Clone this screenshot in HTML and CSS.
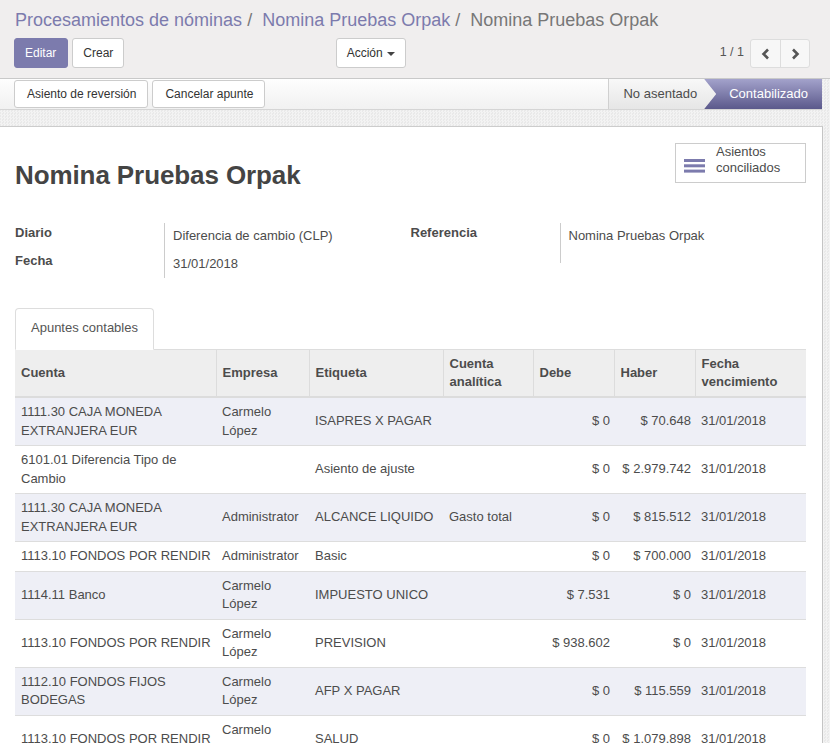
FILE: index.html
```html
<!DOCTYPE html>
<html lang="es">
<head>
<meta charset="utf-8">
<title>Nomina Pruebas Orpak</title>
<link rel="stylesheet" href="styles.css">
</head>
<body>
<div class="cp">
  <ol class="bc">
    <li><a>Procesamientos de nóminas</a></li>
    <li><a>Nomina Pruebas Orpak</a></li>
    <li class="active">Nomina Pruebas Orpak</li>
  </ol>
  <div class="cp-row">
    <div class="cp-left">
      <div class="btn-group">
        <button class="btn btn-primary">Editar</button>
        <button class="btn">Crear</button>
      </div>
      <button class="btn">Acción <span class="caret"></span></button>
    </div>
    <div class="cp-right">
      <span class="pager-val">1 / 1</span>
      <div class="pager-btns">
        <button class="pbtn"><svg width="10" height="12" viewBox="0 0 10 12"><polyline points="7,1.5 2.5,6 7,10.5" fill="none" stroke="#555" stroke-width="2.6"/></svg></button>
        <button class="pbtn"><svg width="10" height="12" viewBox="0 0 10 12"><polyline points="3,1.5 7.5,6 3,10.5" fill="none" stroke="#555" stroke-width="2.6"/></svg></button>
      </div>
    </div>
  </div>
</div>

<div class="content">
  <div class="statusbar">
    <div class="sb-btns">
      <button class="btn sb">Asiento de reversión</button>
      <button class="btn sb">Cancelar apunte</button>
    </div>
    <div class="sb-status">
      <span class="st st-off">No asentado</span>
      <span class="st st-on">Contabilizado</span>
    </div>
  </div>

  <div class="sheet">
    <div class="head">
      <h1 class="title">Nomina Pruebas Orpak</h1>
      <button class="stat-btn">
        <svg class="stat-ico" width="21" height="14" viewBox="0 0 21 14"><rect x="0" y="0" width="21" height="3" fill="#7c7bad"/><rect x="0" y="5.3" width="21" height="3" fill="#7c7bad"/><rect x="0" y="10.6" width="21" height="3" fill="#7c7bad"/></svg>
        <span class="stat-txt">Asientos<br>conciliados</span>
      </button>
    </div>

    <div class="groups">
      <div class="group">
        <div class="labels">
          <div class="lbl">Diario</div>
          <div class="lbl">Fecha</div>
        </div>
        <div class="vals vals-left">
          <div class="val">Diferencia de cambio (CLP)</div>
          <div class="val">31/01/2018</div>
        </div>
      </div>
      <div class="group">
        <div class="labels">
          <div class="lbl">Referencia</div>
        </div>
        <div class="vals vals-right">
          <div class="val">Nomina Pruebas Orpak</div>
        </div>
      </div>
    </div>

    <div class="tabs">
      <div class="tab">Apuntes contables</div>
    </div>

    <table class="lines">
      <colgroup>
        <col class="c1"><col class="c2"><col class="c3"><col class="c4"><col class="c5"><col class="c6"><col class="c7">
      </colgroup>
      <thead>
        <tr>
          <th>Cuenta</th><th>Empresa</th><th>Etiqueta</th><th>Cuenta<br>analítica</th><th>Debe</th><th>Haber</th><th>Fecha<br>vencimiento</th>
        </tr>
      </thead>
      <tbody>
        <tr class="odd"><td>1111.30 CAJA MONEDA<br>EXTRANJERA EUR</td><td>Carmelo<br>López</td><td>ISAPRES X PAGAR</td><td></td><td class="num">$ 0</td><td class="num">$ 70.648</td><td>31/01/2018</td></tr>
        <tr><td>6101.01 Diferencia Tipo de<br>Cambio</td><td></td><td>Asiento de ajuste</td><td></td><td class="num">$ 0</td><td class="num">$ 2.979.742</td><td>31/01/2018</td></tr>
        <tr class="odd"><td>1111.30 CAJA MONEDA<br>EXTRANJERA EUR</td><td>Administrator</td><td>ALCANCE LIQUIDO</td><td>Gasto total</td><td class="num">$ 0</td><td class="num">$ 815.512</td><td>31/01/2018</td></tr>
        <tr><td>1113.10 FONDOS POR RENDIR</td><td>Administrator</td><td>Basic</td><td></td><td class="num">$ 0</td><td class="num">$ 700.000</td><td>31/01/2018</td></tr>
        <tr class="odd"><td>1114.11 Banco</td><td>Carmelo<br>López</td><td>IMPUESTO UNICO</td><td></td><td class="num">$ 7.531</td><td class="num">$ 0</td><td>31/01/2018</td></tr>
        <tr><td>1113.10 FONDOS POR RENDIR</td><td>Carmelo<br>López</td><td>PREVISION</td><td></td><td class="num">$ 938.602</td><td class="num">$ 0</td><td>31/01/2018</td></tr>
        <tr class="odd"><td>1112.10 FONDOS FIJOS<br>BODEGAS</td><td>Carmelo<br>López</td><td>AFP X PAGAR</td><td></td><td class="num">$ 0</td><td class="num">$ 115.559</td><td>31/01/2018</td></tr>
        <tr><td>1113.10 FONDOS POR RENDIR</td><td>Carmelo<br>López</td><td>SALUD</td><td></td><td class="num">$ 0</td><td class="num">$ 1.079.898</td><td>31/01/2018</td></tr>
      </tbody>
    </table>
  </div>
</div>
</body>
</html>
```

FILE: styles.css
```css
html, body {
  margin: 0;
  padding: 0;
  overflow: hidden;
}
body {
  width: 830px;
  height: 743px;
  font-family: "Liberation Sans", Arial, sans-serif;
  font-size: 13px;
  line-height: 1.42857;
  color: #4c4c4c;
  background: #fff;
}

/* control panel */
.cp {
  box-sizing: border-box;
  height: 79px;
  background: #f0eeee;
  border-bottom: 1px solid #c9c9c9;
  padding: 7px 20px 0 14px;
}
.bc {
  display: flex;
  margin: 0 0 5px 1px;
  padding: 0;
  list-style: none;
  font-size: 18px;
  line-height: 26px;
}
.bc li a { color: #7c7bad; }
.bc li + li::before {
  content: "/\00a0";
  padding: 0 5px;
  color: #777;
}
.bc li.active { color: #777; }

.cp-row {
  display: flex;
  align-items: center;
  height: 30px;
}
.cp-left {
  width: 392px;
  display: flex;
  justify-content: space-between;
}
.btn-group {
  display: flex;
  gap: 4px;
}
.btn {
  font-family: "Liberation Sans", Arial, sans-serif;
  font-size: 12px;
  line-height: 18px;
  padding: 5px 10px;
  border: 1px solid #ccc;
  border-radius: 3px;
  background: #fff;
  color: #333;
  cursor: pointer;
  margin: 0;
}
.btn-primary {
  background: #7c7bad;
  border-color: #7c7bad;
  color: #fff;
  padding-right: 11px;
}
.caret {
  display: inline-block;
  width: 0;
  height: 0;
  vertical-align: middle;
  margin-left: 1px;
  border-top: 4px solid #444;
  border-left: 4px solid transparent;
  border-right: 4px solid transparent;
}
.cp-right {
  flex: 1;
  display: flex;
  justify-content: flex-end;
  align-items: center;
}
.pager-val {
  font-size: 12.5px;
  color: #555;
  margin-right: 6px;
}
.pager-btns {
  display: flex;
  border: 1px solid #ddd;
  border-radius: 3px;
  background: #f7f7f7;
  margin-top: 1px;
}
.pbtn {
  width: 29px;
  height: 27px;
  border: 0;
  padding: 0;
  margin: 0;
  background: transparent;
  display: flex;
  align-items: center;
  justify-content: center;
}
.pbtn + .pbtn { border-left: 1px solid #ddd; }

/* content area */
.content {
  background-color: #ececec;
  background-image: repeating-conic-gradient(#f3f3f3 0 25%, #e9e9e9 0 50%);
  background-size: 3px 3px;
  height: 664px;
}
.statusbar {
  width: 822px;
  height: 30px;
  border-bottom: 1px solid #d5d5d5;
  background: linear-gradient(#fefefe, #f1f1f1);
  display: flex;
  justify-content: space-between;
  align-items: stretch;
}
.sb-btns {
  display: flex;
  align-items: center;
  gap: 4px;
  padding-left: 14px;
}
.btn.sb {
  padding: 4px 11px 4px 12px;
}
.sb-status {
  display: flex;
}
.st {
  display: flex;
  align-items: center;
  font-size: 13px;
}
.st-off {
  border-left: 1px solid #d0d0d0;
  background: linear-gradient(#f8f8f8, #e6e6e6);
  padding: 0 19px 0 14px;
}
.st-on {
  margin-left: -12px;
  padding: 0 14px 0 25px;
  color: #fff;
  background: linear-gradient(#a3a2cb, #5b598b);
  clip-path: polygon(0 0, 100% 0, 100% 100%, 0 100%, 12px 50%);
}

/* sheet */
.sheet {
  width: 791px;
  margin-top: 16px;
  padding: 16px 16px 0 15px;
  background: #fff;
  border-top: 1px solid #ccc;
  border-right: 1px solid #c4c4c4;
  height: 600px;
}
.head {
  display: flex;
  justify-content: space-between;
  align-items: flex-start;
}
.title {
  margin: 18px 0 0 0;
  font-size: 26px;
  line-height: 28px;
  font-weight: bold;
  color: #444;
  letter-spacing: -0.1px;
}
.stat-btn {
  width: 131px;
  height: 40px;
  box-sizing: border-box;
  border: 1px solid #ccc;
  background: #fff;
  padding: 0 0 0 8px;
  margin: 0;
  display: flex;
  align-items: flex-start;
  font-family: "Liberation Sans", Arial, sans-serif;
  text-align: left;
}
.stat-ico {
  margin-top: 15px;
  flex: none;
}
.stat-txt {
  margin-left: 11px;
  font-size: 13px;
  line-height: 16px;
  color: #4c4c4c;
}

.groups {
  display: flex;
  margin-top: 34px;
}
.group {
  width: 396px;
  display: flex;
  align-items: flex-start;
}
.labels {
  width: 149px;
  flex: none;
  padding-top: 1px;
}
.lbl {
  font-weight: bold;
  line-height: 18px;
  margin-bottom: 10px;
}
.vals {
  flex: 1;
  border-left: 1px solid #ccc;
  padding: 4px 0 0 8px;
  box-sizing: border-box;
}
.vals-left { height: 55px; }
.vals-right { height: 40px; }
.val {
  line-height: 18px;
  margin-bottom: 10px;
}

.tabs {
  margin-top: 28px;
  border-bottom: 1px solid #ddd;
  display: flex;
  height: 42px;
  box-sizing: border-box;
}
.tab {
  border: 1px solid #ddd;
  border-bottom-color: #fff;
  border-radius: 4px 4px 0 0;
  padding: 10px 15px 12px;
  line-height: 18px;
  height: 42px;
  box-sizing: border-box;
  background: #fff;
  color: #555;
  margin-bottom: -1px;
}

.lines {
  width: 791px;
  table-layout: fixed;
  border-collapse: collapse;
}
.c1 { width: 201px; }
.c2 { width: 93px; }
.c3 { width: 134px; }
.c4 { width: 90px; }
.c5 { width: 81px; }
.c6 { width: 81px; }
.c7 { width: 111px; }
.lines th {
  background: #eee;
  font-weight: bold;
  text-align: left;
  padding: 5px 4px 5px 6px;
  line-height: 18px;
  border-left: 1px solid #dcdcdc;
  border-bottom: 2px solid #dcdcdc;
  vertical-align: middle;
  white-space: nowrap;
}
.lines th:first-child { border-left: 0; }
.lines td {
  padding: 5px 4px 5px 6px;
  line-height: 18.5px;
  border-top: 1px solid #ddd;
  vertical-align: middle;
  white-space: nowrap;
}
.lines tr.odd td { background: #eeeff6; }
.lines td.num { text-align: right; }
```
